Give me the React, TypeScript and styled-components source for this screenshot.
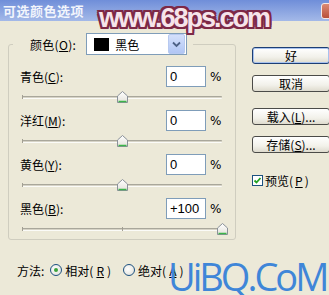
import React from "react";
import styled, { createGlobalStyle } from "styled-components";

const GlobalStyle = createGlobalStyle`
  html, body { margin: 0; padding: 0; background: #ece9d8; }
  body {
    font-family: "Liberation Sans", "Noto Sans CJK SC", sans-serif;
    font-size: 12px;
    color: #000;
  }
`;

const Window = styled.div`
  position: relative;
  width: 329px;
  height: 295px;
  overflow: hidden;
  background: #ece9d8;
`;

const TitleBar = styled.div`
  height: 21px;
  display: flex;
  align-items: center;
  justify-content: space-between;
  padding-left: 3px;
  background: linear-gradient(#6f8ed9, #a4b9e8);
  color: #f2f5fc;
  font: bold 13px "Noto Sans CJK SC", sans-serif;
  letter-spacing: 0.5px;
`;

const CloseBtn = styled.div`
  width: 14px;
  height: 14px;
  margin-right: -8px;
  border: 1px solid #f4e8e4;
  border-radius: 3px;
  background: linear-gradient(#dc8a74, #b9503a);
`;

const Body = styled.div`
  display: flex;
  gap: 16px;
  padding: 12px 0 0 8px;
`;

const LeftCol = styled.div`
  width: 230px;
  display: flex;
  flex-direction: column;
`;

const GroupBox = styled.fieldset`
  margin: 0;
  min-width: 0;
  padding: 11px 13px 4px 11px;
  border: 1px solid #cfcdbf;
  border-radius: 3px;
  display: flex;
  flex-direction: column;
  gap: 7px;
`;

const Legend = styled.legend`
  display: flex;
  align-items: center;
  gap: 10px;
  margin-left: -7px;
  padding: 0 6px 0 17px;
`;

const LegendLabel = styled.span`
  font-family: "Noto Sans CJK SC", sans-serif;
  letter-spacing: 0.3px;
`;

const Select = styled.div`
  width: 101px;
  height: 22px;
  box-sizing: border-box;
  display: flex;
  align-items: center;
  padding-left: 7px;
  border: 1px solid #7f9db9;
  background: #fff;
  font-family: "Noto Sans CJK SC", sans-serif;
`;

const Swatch = styled.span<{ $color: string }>`
  width: 15px;
  height: 13px;
  background: ${(p) => p.$color};
  margin-right: 6px;
`;

const DropBtn = styled.span`
  margin-left: auto;
  margin-right: 1px;
  width: 15px;
  height: 18px;
  border: 1px solid #b7c9f0;
  border-radius: 2px;
  background: linear-gradient(#d4e0fb, #b1c6f4);
  display: flex;
  align-items: center;
  justify-content: center;
`;

const Channel = styled.div`
  display: flex;
  flex-direction: column;
`;

const InputLine = styled.div`
  height: 21px;
  display: flex;
  align-items: center;
`;

const Label = styled.span`
  flex: 1;
  font-family: "Noto Sans CJK SC", sans-serif;
`;

const ValueBox = styled.div`
  width: 40px;
  height: 21px;
  box-sizing: border-box;
  border: 1px solid #7f9db9;
  background: #fff;
  display: flex;
  align-items: center;
  padding-left: 3px;
  font: 13px "Liberation Sans", sans-serif;
`;

const Percent = styled.span`
  width: 12px;
  margin-left: 4px;
  font: 12px "DejaVu Sans", sans-serif;
`;

const SliderArea = styled.div`
  position: relative;
  height: 16px;
  margin-left: 2px;
  width: 200px;
`;

const Track = styled.div`
  position: absolute;
  left: 0;
  right: 0;
  top: 9px;
  height: 1px;
  border-top: 1px solid #a9a79b;
  border-bottom: 1px solid #fbfbf8;
  background: #d6d3c6;
  border-radius: 1px;
`;

const Tick = styled.div`
  position: absolute;
  top: 8px;
  width: 1px;
  height: 4px;
  background: #a29f93;
`;

const Thumb = styled.svg`
  position: absolute;
  top: 4px;
  margin-left: -5px;
`;

const MethodRow = styled.div`
  display: flex;
  align-items: center;
  margin-top: 23px;
  padding-left: 9px;
  height: 14px;
  font-family: "Noto Sans CJK SC", sans-serif;
`;

const RadioItem = styled.label<{ $gap: number }>`
  display: flex;
  align-items: center;
  gap: 3px;
  margin-left: ${(p) => p.$gap}px;
`;

const RadioDot = styled.span<{ $on: boolean }>`
  width: 12px;
  height: 12px;
  box-sizing: border-box;
  border-radius: 50%;
  border: 1px solid #1c5180;
  background: radial-gradient(circle at 40% 40%, #fff, #dcdcd4);
  display: flex;
  align-items: center;
  justify-content: center;
  &::after {
    content: "";
    width: 4px;
    height: 4px;
    border-radius: 50%;
    background: ${(p) => (p.$on ? "#3ba33b" : "transparent")};
  }
`;

const RightCol = styled.div`
  display: flex;
  flex-direction: column;
  padding-top: 14px;
`;

const Button = styled.div<{ $default?: boolean; $space?: number }>`
  width: 78px;
  height: 17px;
  box-sizing: border-box;
  margin-top: ${(p) => p.$space ?? 0}px;
  border: 1px solid ${(p) => (p.$default ? "#1d3e74" : "#4b4b48")};
  border-radius: 3px;
  background: linear-gradient(#ffffff, #f2f1ea 60%, #dedbce);
  box-shadow: ${(p) => (p.$default ? "inset 0 0 0 1px #a8c2ee" : "none")};
  display: flex;
  align-items: center;
  justify-content: center;
  font-family: "Noto Sans CJK SC", sans-serif;
`;

const CheckRow = styled.label`
  display: flex;
  align-items: center;
  gap: 2px;
  margin-top: 19px;
  font-family: "Noto Sans CJK SC", sans-serif;
`;

const CheckBox = styled.span`
  width: 11px;
  height: 11px;
  box-sizing: border-box;
  border: 1px solid #1c5180;
  background: #fff;
  display: flex;
  align-items: center;
  justify-content: center;
`;

const SiteMark = styled.div`
  position: absolute;
  left: 99px;
  top: 3px;
  font: bold 27px "Liberation Sans", sans-serif;
  letter-spacing: -2px;
  color: #f6e4ea;
  text-shadow: -2px 0 0 #7d2846, 2px 0 0 #7d2846, 0 -2px 0 #7d2846, 0 2px 0 #7d2846,
    -2px -2px 0 #7d2846, 2px 2px 0 #7d2846, -2px 2px 0 #7d2846, 2px -2px 0 #7d2846,
    0 0 3px #b35c7c;
`;

const CornerMark = styled.div`
  position: absolute;
  left: 168px;
  top: 250px;
  font: 38px "Open Sans", sans-serif;
  letter-spacing: -3px;
  color: #3f86d8;
`;

const channels = [
  { name: "青色", key: "C", value: 0 },
  { name: "洋红", key: "M", value: 0 },
  { name: "黄色", key: "Y", value: 0 },
  { name: "黑色", key: "B", value: 100 },
];

function SliderThumb({ pos }: { pos: number }) {
  return (
    <Thumb width="11" height="12" viewBox="0 0 11 12" style={{ left: `${pos}%` }}>
      <defs>
        <linearGradient id="tg" x1="0" y1="0" x2="0" y2="1">
          <stop offset="0" stopColor="#ffffff" />
          <stop offset="1" stopColor="#e3e2da" />
        </linearGradient>
      </defs>
      <path d="M0.5 5 L5.5 0.5 L10.5 5 L10.5 11.5 L0.5 11.5 Z" fill="url(#tg)" stroke="#8a9199" />
      <path d="M1.5 10.5 H9.5" stroke="#3cb44a" strokeWidth="1.5" />
    </Thumb>
  );
}

function ChannelRow({ name, keyChar, value }: { name: string; keyChar: string; value: number }) {
  const pos = (value + 100) / 2;
  return (
    <Channel>
      <InputLine>
        <Label>
          {name}(<u>{keyChar}</u>):
        </Label>
        <ValueBox>{value > 0 ? `+${value}` : value}</ValueBox>
        <Percent>%</Percent>
      </InputLine>
      <SliderArea>
        <Track />
        <Tick style={{ left: 0 }} />
        <Tick style={{ left: "50%" }} />
        <SliderThumb pos={pos} />
      </SliderArea>
    </Channel>
  );
}

export default function App() {
  return (
    <Window>
      <GlobalStyle />
      <TitleBar>
        <span>可选颜色选项</span>
        <CloseBtn />
      </TitleBar>
      <Body>
        <LeftCol>
          <GroupBox>
            <Legend>
              <LegendLabel>
                颜色(<u>O</u>):
              </LegendLabel>
              <Select>
                <Swatch $color="#000" />
                黑色
                <DropBtn>
                  <svg width="9" height="7" viewBox="0 0 9 7">
                    <path d="M1 1.5 L4.5 5 L8 1.5" fill="none" stroke="#4d6185" strokeWidth="1.8" />
                  </svg>
                </DropBtn>
              </Select>
            </Legend>
            {channels.map((c) => (
              <ChannelRow key={c.key} name={c.name} keyChar={c.key} value={c.value} />
            ))}
          </GroupBox>
          <MethodRow>
            方法:
            <RadioItem $gap={6}>
              <RadioDot $on />
              相对(<u>R</u>)
            </RadioItem>
            <RadioItem $gap={12}>
              <RadioDot $on={false} />
              绝对(<u>A</u>)
            </RadioItem>
          </MethodRow>
        </LeftCol>
        <RightCol>
          <Button $default>好</Button>
          <Button $space={11}>取消</Button>
          <Button $space={16}>
            载入(<u>L</u>)...
          </Button>
          <Button $space={11}>
            存储(<u>S</u>)...
          </Button>
          <CheckRow>
            <CheckBox>
              <svg width="9" height="9" viewBox="0 0 9 9">
                <path d="M1.5 4.5 L3.5 6.5 L7.5 2" fill="none" stroke="#21a121" strokeWidth="1.8" />
              </svg>
            </CheckBox>
            预览(<u>P</u>)
          </CheckRow>
        </RightCol>
      </Body>
      <SiteMark>www.68ps.com</SiteMark>
      <CornerMark>UiBQ.CoM</CornerMark>
    </Window>
  );
}
